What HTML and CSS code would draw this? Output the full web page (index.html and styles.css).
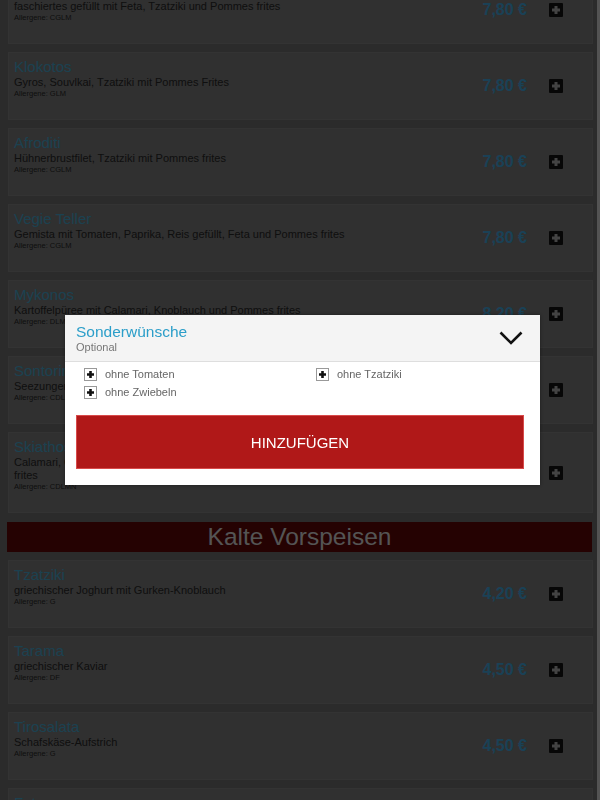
FILE: index.html
```html
<!DOCTYPE html>
<html lang="de">
<head>
    <meta charset="UTF-8">
    <meta name="viewport" content="width=device-width, initial-scale=1.0">
    <title>Speisekarte</title>
    <link rel="stylesheet" href="styles.css">
</head>
<body>
    <div class="menu">
        <div class="dish">
            <div class="dish-info">
                <div class="dish-name">Bifteki</div>
                <div class="dish-desc">faschiertes gefüllt mit Feta, Tzatziki und Pommes frites</div>
                <div class="dish-allergens">Allergene: CGLM</div>
            </div>
            <div class="dish-price">7,80 €</div>
            <button class="add-btn" aria-label="Hinzufügen"><svg viewBox="0 0 14 14"><rect width="14" height="14" rx="1"/><path d="M7 3v8M3 7h8"/></svg></button>
        </div>
        <div class="dish">
            <div class="dish-info">
                <div class="dish-name">Klokotos</div>
                <div class="dish-desc">Gyros, Souvlkai, Tzatziki mit Pommes Frites</div>
                <div class="dish-allergens">Allergene: GLM</div>
            </div>
            <div class="dish-price">7,80 €</div>
            <button class="add-btn" aria-label="Hinzufügen"><svg viewBox="0 0 14 14"><rect width="14" height="14" rx="1"/><path d="M7 3v8M3 7h8"/></svg></button>
        </div>
        <div class="dish">
            <div class="dish-info">
                <div class="dish-name">Afroditi</div>
                <div class="dish-desc">Hühnerbrustfilet, Tzatziki mit Pommes frites</div>
                <div class="dish-allergens">Allergene: CGLM</div>
            </div>
            <div class="dish-price">7,80 €</div>
            <button class="add-btn" aria-label="Hinzufügen"><svg viewBox="0 0 14 14"><rect width="14" height="14" rx="1"/><path d="M7 3v8M3 7h8"/></svg></button>
        </div>
        <div class="dish">
            <div class="dish-info">
                <div class="dish-name">Vegie Teller</div>
                <div class="dish-desc">Gemista mit Tomaten, Paprika, Reis gefüllt, Feta und Pommes frites</div>
                <div class="dish-allergens">Allergene: CGLM</div>
            </div>
            <div class="dish-price">7,80 €</div>
            <button class="add-btn" aria-label="Hinzufügen"><svg viewBox="0 0 14 14"><rect width="14" height="14" rx="1"/><path d="M7 3v8M3 7h8"/></svg></button>
        </div>
        <div class="dish">
            <div class="dish-info">
                <div class="dish-name">Mykonos</div>
                <div class="dish-desc">Kartoffelpüree mit Calamari, Knoblauch und Pommes frites</div>
                <div class="dish-allergens">Allergene: DLM</div>
            </div>
            <div class="dish-price">8,20 €</div>
            <button class="add-btn" aria-label="Hinzufügen"><svg viewBox="0 0 14 14"><rect width="14" height="14" rx="1"/><path d="M7 3v8M3 7h8"/></svg></button>
        </div>
        <div class="dish">
            <div class="dish-info">
                <div class="dish-name">Sontorini</div>
                <div class="dish-desc">Seezungenfilet mit Reis, Salat und Pommes frites</div>
                <div class="dish-allergens">Allergene: CDLM</div>
            </div>
            <div class="dish-price">8,50 €</div>
            <button class="add-btn" aria-label="Hinzufügen"><svg viewBox="0 0 14 14"><rect width="14" height="14" rx="1"/><path d="M7 3v8M3 7h8"/></svg></button>
        </div>
        <div class="dish">
            <div class="dish-info">
                <div class="dish-name">Skiathos</div>
                <div class="dish-desc">Calamari, Gyros, Souvlaki, Bifteki, Tzatziki, Krautsalat, Reis, Tomaten und Pommes<br>frites</div>
                <div class="dish-allergens">Allergene: CDLMN</div>
            </div>
            <div class="dish-price">8,90 €</div>
            <button class="add-btn" aria-label="Hinzufügen"><svg viewBox="0 0 14 14"><rect width="14" height="14" rx="1"/><path d="M7 3v8M3 7h8"/></svg></button>
        </div>

        <h2 class="category">Kalte Vorspeisen</h2>

        <div class="dish">
            <div class="dish-info">
                <div class="dish-name">Tzatziki</div>
                <div class="dish-desc">griechischer Joghurt mit Gurken-Knoblauch</div>
                <div class="dish-allergens">Allergene: G</div>
            </div>
            <div class="dish-price">4,20 €</div>
            <button class="add-btn" aria-label="Hinzufügen"><svg viewBox="0 0 14 14"><rect width="14" height="14" rx="1"/><path d="M7 3v8M3 7h8"/></svg></button>
        </div>
        <div class="dish">
            <div class="dish-info">
                <div class="dish-name">Tarama</div>
                <div class="dish-desc">griechischer Kaviar</div>
                <div class="dish-allergens">Allergene: DF</div>
            </div>
            <div class="dish-price">4,50 €</div>
            <button class="add-btn" aria-label="Hinzufügen"><svg viewBox="0 0 14 14"><rect width="14" height="14" rx="1"/><path d="M7 3v8M3 7h8"/></svg></button>
        </div>
        <div class="dish">
            <div class="dish-info">
                <div class="dish-name">Tirosalata</div>
                <div class="dish-desc">Schafskäse-Aufstrich</div>
                <div class="dish-allergens">Allergene: G</div>
            </div>
            <div class="dish-price">4,50 €</div>
            <button class="add-btn" aria-label="Hinzufügen"><svg viewBox="0 0 14 14"><rect width="14" height="14" rx="1"/><path d="M7 3v8M3 7h8"/></svg></button>
        </div>
        <div class="dish">
            <div class="dish-info">
                <div class="dish-name">Feta</div>
                <div class="dish-desc">Schafskäse mit Olivenöl und Oregano</div>
                <div class="dish-allergens">Allergene: G</div>
            </div>
            <div class="dish-price">4,90 €</div>
            <button class="add-btn" aria-label="Hinzufügen"><svg viewBox="0 0 14 14"><rect width="14" height="14" rx="1"/><path d="M7 3v8M3 7h8"/></svg></button>
        </div>
    </div>

    <div class="scroll-track"></div>

    <div class="overlay"></div>

    <div class="modal">
        <div class="modal-header">
            <div>
                <div class="modal-title">Sonderwünsche</div>
                <div class="modal-subtitle">Optional</div>
            </div>
            <svg class="chevron" viewBox="0 0 24 14"><path d="M1.5 1.5L12 12L22.5 1.5"/></svg>
        </div>
        <div class="options">
            <label class="option"><svg class="check" viewBox="0 0 13 13"><rect x="0.5" y="0.5" width="12" height="12"/><path d="M6.5 3v7M3 6.5h7"/></svg>ohne Tomaten</label>
            <label class="option"><svg class="check" viewBox="0 0 13 13"><rect x="0.5" y="0.5" width="12" height="12"/><path d="M6.5 3v7M3 6.5h7"/></svg>ohne Tzatziki</label>
            <label class="option"><svg class="check" viewBox="0 0 13 13"><rect x="0.5" y="0.5" width="12" height="12"/><path d="M6.5 3v7M3 6.5h7"/></svg>ohne Zwiebeln</label>
        </div>
        <button class="submit-btn">HINZUFÜGEN</button>
    </div>
</body>
</html>
```

FILE: styles.css
```css
:root {
    --page-bg: #6c6c6c;
    --card-bg: #787878;
    --card-border: #808080;
    --accent: #46a4c8;
    --text: #262626;
    --red: #b01818;
}

body {
    margin: 0;
    background: var(--page-bg);
    color: var(--text);
    font-family: "Liberation Sans", Arial, sans-serif;
    overflow: hidden;
    height: 800px;
}

.menu {
    margin-top: -24px;
    padding: 0 7px 0 8px;
    display: flex;
    flex-direction: column;
    gap: 8px;
}

.dish {
    display: flex;
    align-items: center;
    background: var(--card-bg);
    border: 1px solid var(--card-border);
    padding: 5px 29px 20px 5px;
    min-height: 41px;
}

.dish-info {
    flex: 1;
    min-width: 0;
    align-self: flex-start;
}

.dish-name {
    font-size: 15px;
    line-height: 18px;
    color: var(--accent);
}

.dish-desc {
    font-size: 11px;
    line-height: 13px;
}

.dish-allergens {
    font-size: 7.5px;
    line-height: 10px;
}

.dish-price {
    font-size: 16px;
    font-weight: bold;
    color: #42a2d6;
    margin-top: 15px;
}

.add-btn {
    margin: 15px 0 0 22px;
    padding: 0;
    border: 0;
    background: none;
    width: 14px;
    height: 14px;
}

.add-btn svg {
    display: block;
    width: 14px;
    height: 14px;
}

.add-btn rect {
    fill: #121212;
}

.add-btn path {
    stroke: #a8a8a8;
    stroke-width: 3;
}

.category {
    margin: 1px 1px 0 -1px;
    height: 30px;
    line-height: 30px;
    background: #5c0606;
    color: #d2d2d2;
    font-size: 24.5px;
    font-weight: normal;
    text-align: center;
}

.scroll-track {
    position: fixed;
    top: 0;
    right: 0;
    width: 3px;
    height: 100%;
    background: #cfcfcf;
}

.overlay {
    position: fixed;
    inset: 0;
    background: rgba(0, 0, 0, 0.6);
}

.modal {
    position: fixed;
    top: 315px;
    left: 65px;
    width: 475px;
    height: 170px;
    background: #fff;
    box-shadow: 0 0 4px rgba(0, 0, 0, 0.4);
}

.modal-header {
    display: flex;
    align-items: center;
    justify-content: space-between;
    height: 46px;
    padding: 0 17px 0 11px;
    background: #f4f4f4;
    border-bottom: 1px solid #dedede;
}

.modal-title {
    font-size: 15.5px;
    line-height: 18px;
    color: #2b9ec9;
}

.modal-subtitle {
    font-size: 11px;
    line-height: 13px;
    color: #777;
}

.chevron {
    width: 24px;
    height: 14px;
    fill: none;
    stroke: #111;
    stroke-width: 2.6;
}

.options {
    display: grid;
    grid-template-columns: 232px 1fr;
    align-content: start;
    row-gap: 5px;
    padding: 6px 0 0 19px;
    height: 47px;
    box-sizing: border-box;
}

.option {
    display: flex;
    align-items: center;
    gap: 8px;
    height: 13px;
    line-height: 13px;
    font-size: 11px;
    color: #666;
}

.check {
    width: 13px;
    height: 13px;
    flex-shrink: 0;
}

.check rect {
    fill: #fff;
    stroke: #999;
}

.check path {
    stroke: #111;
    stroke-width: 2.6;
}

.submit-btn {
    display: block;
    margin: 6px 16px 0 11px;
    width: 448px;
    height: 54px;
    border: 1px solid #d84a4a;
    background: var(--red);
    color: #fff;
    font-family: "Liberation Sans", Arial, sans-serif;
    font-size: 15px;
}
```
